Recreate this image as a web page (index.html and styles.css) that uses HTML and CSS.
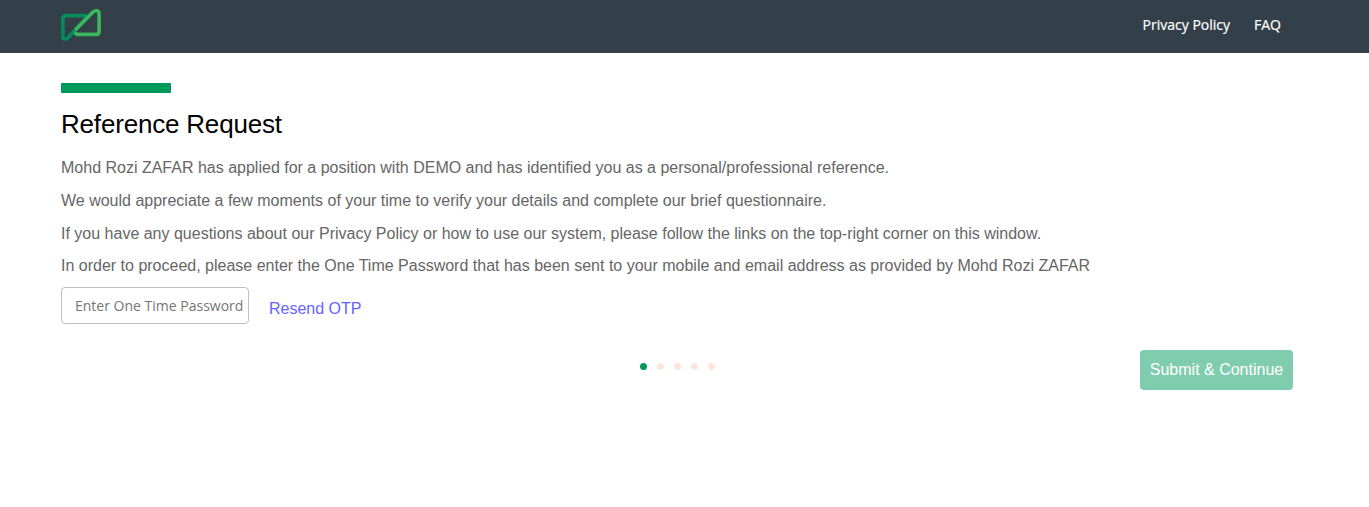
FILE: index.html
```html
<!DOCTYPE html>
<html lang="en">
<head>
<meta charset="utf-8">
<title>Reference Request</title>
<link rel="stylesheet" href="styles.css">
</head>
<body>
<header class="header">
  <svg class="logo" width="40" height="32" viewBox="0 0 40 32" fill="none" stroke-width="3.6" stroke-linecap="round" stroke-linejoin="round">
    <path stroke="#048c5a" d="M25 6.6H4.4Q1.9 6.6 1.9 9V27.5C1.9 30.6 5 30.9 6.7 28.9L25 9.2"/>
    <path stroke="#3bb75e" d="M15 20.2L31.8 3.2C34.8.6 38.1 1.6 38.1 5V22.8Q38.1 25.4 35.5 25.4H16.5Q15.2 25.4 14.7 24.4"/>
  </svg>
  <nav class="nav"><a>Privacy Policy</a><a>FAQ</a></nav>
</header>
<main class="main">
  <div class="accent"></div>
  <h1 class="title">Reference Request</h1>
  <p class="text">Mohd Rozi ZAFAR has applied for a position with DEMO and has identified you as a personal/professional reference.</p>
  <p class="text">We would appreciate a few moments of your time to verify your details and complete our brief questionnaire.</p>
  <p class="text">If you have any questions about our Privacy Policy or how to use our system, please follow the links on the top-right corner on this window.</p>
  <p class="text">In order to proceed, please enter the One Time Password that has been sent to your mobile and email address as provided by Mohd Rozi ZAFAR</p>
  <div class="otp">
    <input class="otp-input" type="text" placeholder="Enter One Time Password">
    <a class="resend">Resend OTP</a>
  </div>
  <div class="footer">
    <div class="dots"><i class="dot active"></i><i class="dot"></i><i class="dot"></i><i class="dot"></i><i class="dot"></i></div>
    <button class="submit">Submit &amp; Continue</button>
  </div>
</main>
</body>
</html>
```
FILE: styles.css
```css
* { box-sizing: border-box; }
body { margin: 0; background: #fff; font-family: "Liberation Sans", Arial, sans-serif; font-size: 16px; color: #666; }
.header { height: 53px; padding: 9px 88px 0 61px; background: #333f49; display: flex; justify-content: space-between; align-items: flex-start; }
.logo { display: block; overflow: visible; }
.nav { display: flex; gap: 24px; padding-top: 6px; font: 14px/20px "Open Sans", sans-serif; color: #fff; -webkit-text-stroke: 0.2px #fff; }
.main { padding: 30px 76px 0 61px; }
.accent { width: 110px; height: 10px; background: #00995d; }
.title { margin: 14px 0 15.3px; font-size: 26px; line-height: 34px; font-weight: 400; letter-spacing: -0.19px; color: #000; }
.text { margin: 0 0 8.65px; line-height: 24px; white-space: nowrap; }
.otp { display: flex; gap: 20px; }
.otp-input { width: 188px; height: 37px; padding: 0 0 0 13px; border: 1px solid #bfbfbf; border-radius: 4px; background: #fff; font: 14px "Open Sans", sans-serif; }
.otp-input::placeholder { color: #757575; opacity: 1; }
.resend { padding-top: 10px; line-height: 24px; color: #6663ff; }
.footer { display: grid; grid-template-columns: 1fr auto 1fr; margin-top: 26px; }
.dots { grid-column: 2; display: flex; gap: 10px; padding-top: 13px; }
.dot { width: 7px; height: 7px; border-radius: 50%; background: #ffe4dc; }
.dot.active { background: #00995d; }
.submit { justify-self: end; width: 153px; height: 40px; padding: 0; border: 0; border-radius: 4px; background: #80ccae; color: #fff; font: 16px "Liberation Sans", Arial, sans-serif; }
```
